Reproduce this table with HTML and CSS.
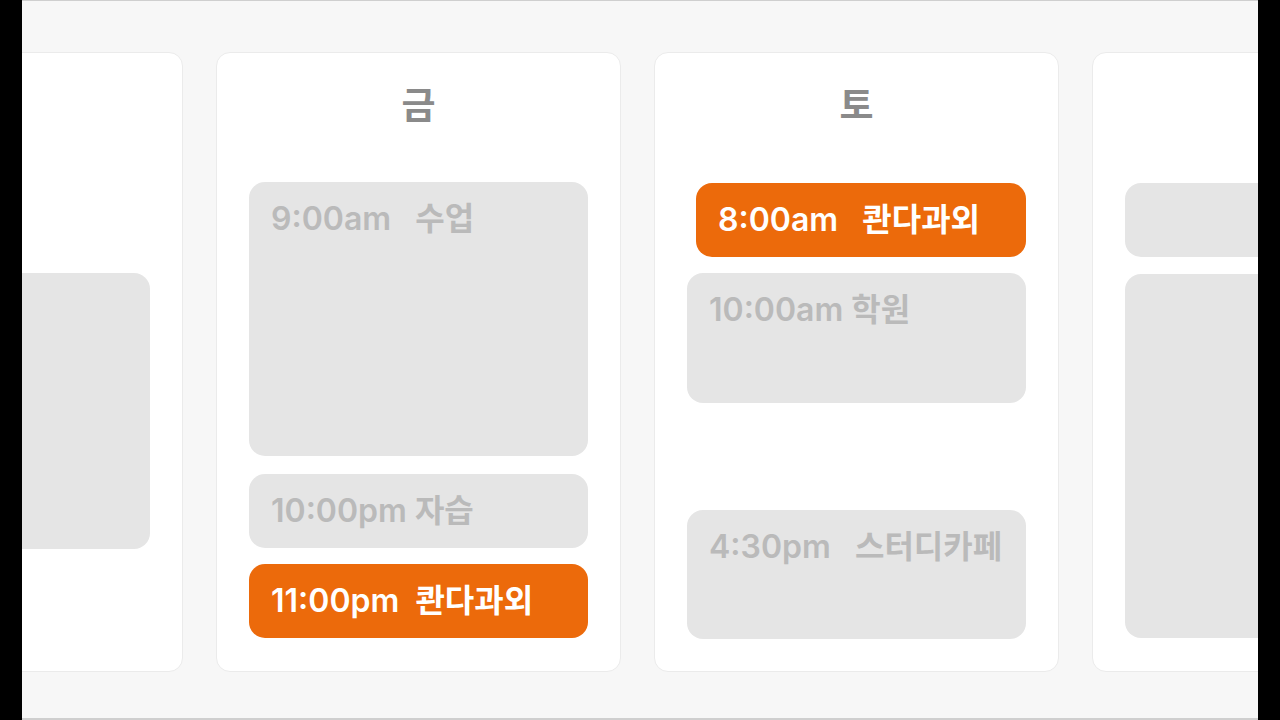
FILE: index.html
```html
<!DOCTYPE html>
<html lang="ko">
<head>
    <meta charset="UTF-8">
    <meta name="viewport" content="width=device-width, initial-scale=1.0">
    <title>주간 일정</title>
    <link rel="stylesheet" href="styles.css">
</head>
<body>
    <div class="screen">
        <div class="week">
            <div class="day">
                <h2 class="day-name">목</h2>
                <div class="events">
                    <div class="event" style="margin-top: 91px; height: 276px;"></div>
                </div>
            </div>

            <div class="day">
                <h2 class="day-name">금</h2>
                <div class="events">
                    <div class="event" style="height: 274px;">9:00am   수업</div>
                    <div class="event" style="margin-top: 2px; height: 74px;">10:00pm 자습</div>
                    <div class="event active" style="height: 74px;">11:00pm  콴다과외</div>
                </div>
            </div>

            <div class="day">
                <h2 class="day-name">토</h2>
                <div class="events">
                    <div class="event active nudge" style="margin-top: 1px; height: 74px;">8:00am   콴다과외</div>
                    <div class="event" style="height: 130px;">10:00am 학원</div>
                    <div class="event" style="margin-top: 91px; height: 129px;">4:30pm   스터디카페</div>
                </div>
            </div>

            <div class="day">
                <h2 class="day-name">일</h2>
                <div class="events">
                    <div class="event" style="margin-top: 1px; height: 74px;"></div>
                    <div class="event" style="margin-top: 1px; height: 364px;"></div>
                </div>
            </div>
        </div>
    </div>
</body>
</html>
```

FILE: styles.css
```css
html, body {
    margin: 0;
    padding: 0;
}
body {
    background-color: #000;
    font-family: Inter, "Noto Sans CJK KR", sans-serif;
    width: 1280px;
    height: 720px;
    overflow: hidden;
}
.screen {
    box-sizing: border-box;
    margin-left: 22px;
    width: 1236px;
    height: 720px;
    background-color: #f7f7f7;
    border-top: 1px solid #cfcfcf;
    border-bottom: 2px solid #cfcfcf;
    overflow: hidden;
}
.week {
    display: flex;
    gap: 33px;
    margin-left: -244px;
    padding-top: 51px;
}
.day {
    box-sizing: border-box;
    flex: 0 0 405px;
    height: 620px;
    background-color: #fff;
    border: 1.5px solid #ebebeb;
    border-radius: 14px;
    padding: 0 32px;
}
.day-name {
    margin: 0;
    height: 129px;
    padding-top: 25px;
    box-sizing: border-box;
    text-align: center;
    font-family: "Noto Sans CJK KR", sans-serif;
    font-size: 37px;
    font-weight: 600;
    line-height: 50px;
    color: #8a8a8a;
}
.events {
    display: flex;
    flex-direction: column;
    gap: 16px;
}
.event {
    box-sizing: border-box;
    background-color: #e5e5e5;
    border-radius: 16px;
    padding: 17px 22px 0;
    font-size: 32px;
    font-weight: 600;
    line-height: 40px;
    color: #bababa;
    white-space: pre;
}
.event.active {
    background-color: #ec6a0b;
    color: #fff;
}
.event.nudge {
    margin-left: 9px;
}
```
